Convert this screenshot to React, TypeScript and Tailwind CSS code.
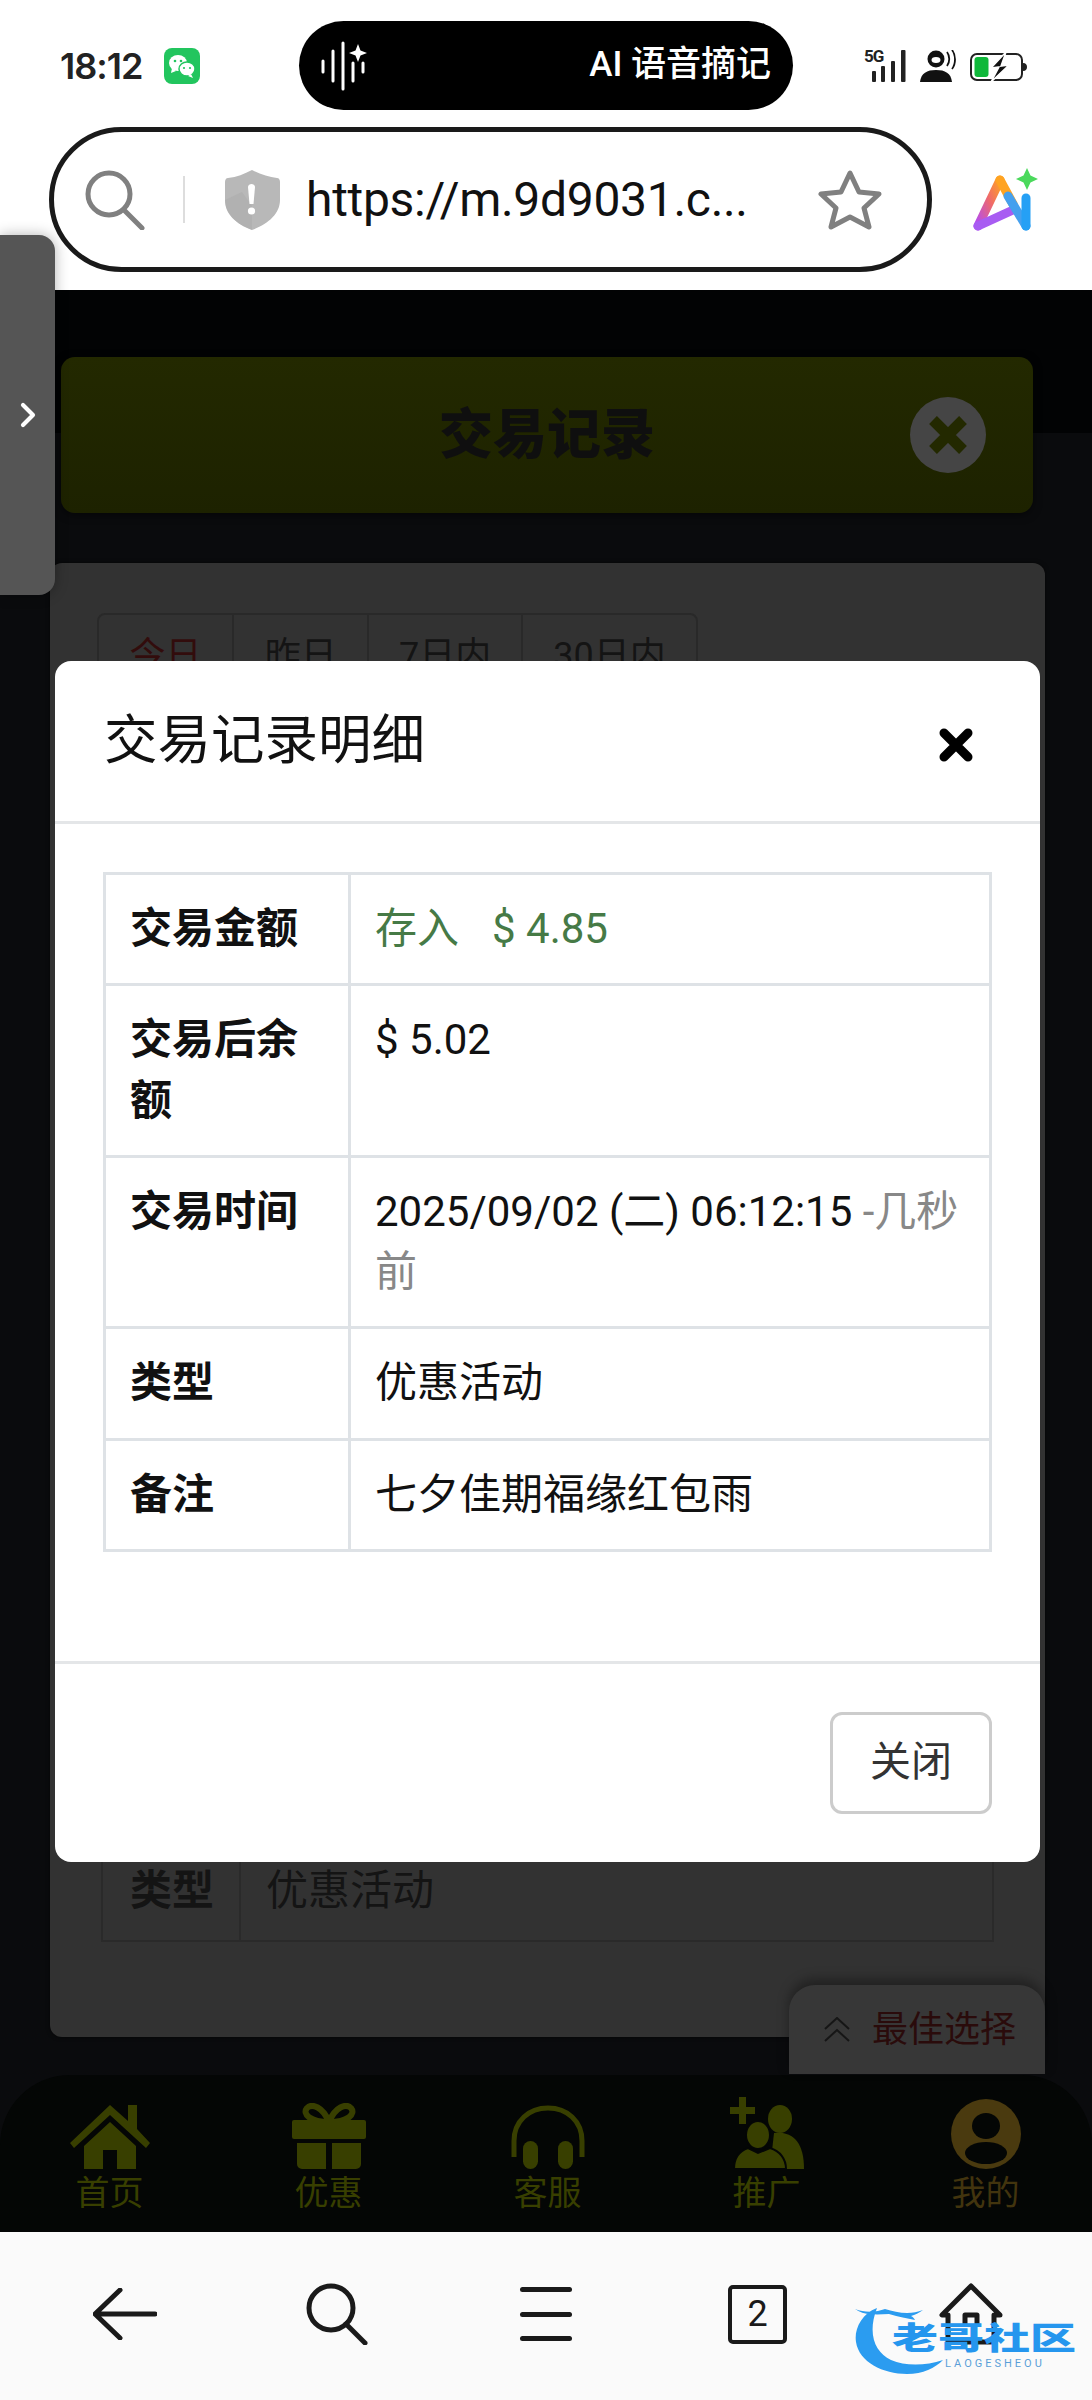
import { ChevronRight } from "lucide-react";

const cjk = "font-['Roboto','Noto_Sans_CJK_SC',sans-serif]";

function WeChatBadge() {
  return (
    <div className="flex h-[36px] w-[36px] items-center justify-center rounded-[8px] bg-[#22c55e]">
      <svg viewBox="0 0 36 36" className="h-[36px] w-[36px]">
        <ellipse cx="14" cy="15" rx="9" ry="8" fill="#fff" />
        <path d="M8 20l-1 5 5-2z" fill="#fff" />
        <ellipse cx="23" cy="21" rx="8" ry="7" fill="#fff" stroke="#22c55e" strokeWidth="1.5" />
        <path d="M27 26l2 4-5-2z" fill="#fff" />
        <circle cx="11" cy="13" r="1.3" fill="#22c55e" />
        <circle cx="17" cy="13" r="1.3" fill="#22c55e" />
        <circle cx="20" cy="20" r="1.1" fill="#22c55e" />
        <circle cx="26" cy="20" r="1.1" fill="#22c55e" />
      </svg>
    </div>
  );
}

function VoiceWave() {
  return (
    <svg viewBox="0 0 50 50" className="h-[50px] w-[50px]" stroke="#fff" strokeWidth="3" strokeLinecap="round">
      <path d="M3 20v11M13 10v30M23 2v46M33 22v18M43 22v9" />
      <path d="M38 3l2.5 6.5L47 12l-6.5 2.5L38 21l-2.5-6.5L29 12l6.5-2.5z" fill="#fff" stroke="none" />
    </svg>
  );
}

function StatusIcons() {
  return (
    <div className="flex items-end gap-[14px]">
      <div className="relative h-[32px] w-[42px]">
        <span className="absolute left-0 top-[-2px] font-['Roboto'] text-[17px] font-bold leading-[16px] tracking-[-1px] text-[#222]">5G</span>
        <svg viewBox="0 0 42 32" className="h-[32px] w-[42px]" fill="#222">
          <rect x="8" y="21" width="4" height="11" rx="1" />
          <rect x="17" y="16" width="4" height="16" rx="1" />
          <rect x="27" y="11" width="4" height="21" rx="1" />
          <rect x="37" y="0" width="4.5" height="32" rx="1" />
        </svg>
      </div>
      <svg viewBox="0 0 36 32" className="h-[32px] w-[36px]">
        <circle cx="16" cy="9" r="8.5" fill="#111" />
        <ellipse cx="16" cy="10" rx="4.5" ry="3" fill="#fff" />
        <path d="M0 32c1-9 7-12 16-12s15 3 16 12z" fill="#111" />
        <path d="M27 2c3 4 3 10 0 14M32 0c4 5 4 14 0 19" fill="none" stroke="#111" strokeWidth="1.8" />
      </svg>
      <svg viewBox="0 0 58 30" className="h-[30px] w-[58px]">
        <rect x="1" y="2" width="51" height="26" rx="6" fill="none" stroke="#222" strokeWidth="2" />
        <rect x="4.5" y="5" width="14" height="20" rx="3" fill="#0fb83a" />
        <path d="M53 11c3 0 4 2 4 4s-1 4-4 4z" fill="#222" />
        <path d="M36 0L21 16l8-1-8 15 18-17-8 1z" fill="#111" stroke="#fff" strokeWidth="1.5" />
      </svg>
    </div>
  );
}

function StatusBar() {
  return (
    <div className="flex h-[127px] items-start pl-[60px] pt-[21px]">
      <div className="flex h-[89px] w-[239px] items-center gap-[22px]">
        <span className="font-['Inter'] text-[36px] font-semibold tracking-[-1px] text-[#222]">18:12</span>
        <WeChatBadge />
      </div>
      <div className="flex h-[89px] w-[494px] items-center justify-between rounded-full bg-black pl-[21px] pr-[22px]">
        <VoiceWave />
        <span className={`${cjk} text-[35px] font-medium text-white`}>AI 语音摘记</span>
      </div>
      <div className="ml-[71px] mt-[29px]">
        <StatusIcons />
      </div>
    </div>
  );
}

function AddressBar() {
  return (
    <div className="flex items-center pl-[49px]">
      <div className="flex h-[145px] w-[883px] items-center rounded-full border-[5px] border-[#1a1a1a] pl-[31px]">
        <svg viewBox="0 0 60 60" className="h-[60px] w-[60px]" fill="none" stroke="#808080" strokeWidth="5" strokeLinecap="round">
          <circle cx="24" cy="24" r="21" />
          <path d="M39 40l18 18" />
        </svg>
        <div className="ml-[38px] h-[47px] w-[2px] bg-[#ddd]" />
        <svg viewBox="0 0 55 60" className="ml-[40px] h-[60px] w-[55px]">
          <path d="M27 0C35 4 44 7 52 8c2 0 3 2 3 4v18c0 14-12 24-28 30C11 54 0 44 0 30V12c0-2 1-4 3-4 9-1 16-4 24-8z" fill="#b8b8b8" />
          <path d="M27 60C11 54 0 44 0 30l17-8 10 14z" fill="#a9a9a9" opacity="0.5" />
          <path d="M23 17c0-2 2-3 3.500-3s3.500 1 3.500 3l-1.500 17h-4z" fill="#fff" />
          <circle cx="26.500" cy="41" r="3.600" fill="#fff" />
        </svg>
        <span className="ml-[26px] w-[448px] font-['Roboto'] text-[48px] font-normal tracking-[-0.3px] text-[#111]">https://m.9d9031.c...</span>
        <svg viewBox="0 0 64 60" className="ml-[64px] h-[62px] w-[64px]" fill="none" stroke="#808080" strokeWidth="5" strokeLinejoin="round">
          <path d="M32 3l9 19 20 2-15 14 5 19-19-10-19 10 5-19L3 24l20-2z" />
        </svg>
      </div>
      <svg viewBox="0 0 66 64" className="ml-[41px] h-[64px] w-[66px]">
        <defs>
          <linearGradient id="aiA" x1="0" y1="1" x2="1" y2="0">
            <stop offset="0" stopColor="#b44cf0" />
            <stop offset="0.55" stopColor="#ef6a6a" />
            <stop offset="1" stopColor="#ffa321" />
          </linearGradient>
        </defs>
        <path d="M5 58L27 12" fill="none" stroke="url(#aiA)" strokeWidth="9" strokeLinecap="round" />
        <path d="M5 58l35-16" fill="none" stroke="#a85cf2" strokeWidth="9" strokeLinecap="round" />
        <path d="M27 12l13 24" fill="none" stroke="#ffa321" strokeWidth="9" strokeLinecap="round" />
        <path d="M35 28l18 30" fill="none" stroke="#45a0ee" strokeWidth="9" strokeLinecap="round" />
        <path d="M53 30v28" fill="none" stroke="#25a0f5" strokeWidth="9" strokeLinecap="round" />
        <path d="M54 0l3.500 7.500 7.500 3.500-7.500 3.500L54 22l-3.500-7.500L43 11l7.500-3.500z" fill="#4bd95c" />
      </svg>
    </div>
  );
}

function HiddenTabs() {
  const tabs = [
    { label: "今日", w: "w-[134px]", color: "text-[#320c0c]" },
    { label: "昨日", w: "w-[136px]", color: "text-[#141414]" },
    { label: "7日内", w: "w-[155px]", color: "text-[#141414]" },
    { label: "30日内", w: "w-[176px]", color: "text-[#141414]" },
  ];
  return (
    <div className="flex h-[100px] w-[601px] rounded-[8px] border-[2px] border-[#292929]">
      {tabs.map((t, i) => (
        <div key={t.label} className={`${t.w} ${t.color} flex items-start justify-center pt-[14px] text-[36px] ${i > 0 ? "border-l-[2px] border-[#292929]" : ""}`}>
          {t.label}
        </div>
      ))}
    </div>
  );
}

function Header() {
  return (
    <div className="relative ml-[61px] mt-[67px] flex h-[156px] w-[972px] items-center justify-center rounded-[14px] bg-gradient-to-b from-[#232900] to-[#1d2200] shadow-[0_2px_8px_rgba(0,0,0,0.5)]">
      <h1 className={`${cjk} text-[54px] font-black text-[#0f0f0f]`}>交易记录</h1>
      <div className="absolute right-[47px] top-[40px] flex h-[76px] w-[76px] items-center justify-center rounded-full bg-[#454545]">
        <svg viewBox="0 0 40 40" className="h-[40px] w-[40px]" stroke="#232900" strokeWidth="11">
          <path d="M5 5l30 30M35 5L5 35" />
        </svg>
      </div>
    </div>
  );
}

function Panel() {
  return (
    <div className="ml-[50px] mt-[50px] flex h-[1474px] w-[995px] flex-col justify-between rounded-[12px] bg-[#323232] px-[47px] pb-[95px] pt-[50px] shadow-[0_0_4px_rgba(0,0,0,0.6)]">
      <HiddenTabs />
      <table className="ml-[4px] w-[893px] border-collapse border-[2px] border-[#2a2a2a] text-[42px] text-[#141414]">
        <tbody>
          <tr>
            <th className="h-[111px] w-[138px] border-[2px] border-[#2a2a2a] pl-[27px] pt-[10px] text-left font-bold">类型</th>
            <td className="border-[2px] border-[#2a2a2a] pl-[25px] pt-[10px]">优惠活动</td>
          </tr>
        </tbody>
      </table>
    </div>
  );
}

function HomeIcon() {
  return (
    <svg viewBox="0 0 80 64" className="h-[64px] w-[80px]" fill="#383f00">
      <path d="M40 0l18 16V0h9v24l13 14-4 5L40 10 4 43l-4-5z" />
      <path d="M40 17l26 24v23H47V45H33v19H14V41z" />
    </svg>
  );
}

function GiftIcon() {
  return (
    <svg viewBox="0 0 74 66" className="h-[66px] w-[74px]">
      <path d="M37 19C31 4 20 0 15 5c-5 6 3 14 22 14zm0 0C43 4 54 0 59 5c5 6-3 14-22 14z" fill="none" stroke="#383f00" strokeWidth="6" />
      <rect x="0" y="17" width="74" height="19" rx="2" fill="#383f00" />
      <path d="M5 40h29v26H10a5 5 0 0 1-5-5zM40 40h29v21a5 5 0 0 1-5 5H40z" fill="#383f00" />
    </svg>
  );
}

function HeadsetIcon() {
  return (
    <svg viewBox="0 0 74 64" className="h-[64px] w-[74px]">
      <path d="M3 52V36C3 16 18 3 37 3s34 13 34 33v16" fill="none" stroke="#383f00" strokeWidth="5" />
      <rect x="12" y="36" width="15" height="28" rx="7.5" fill="#383f00" />
      <rect x="47" y="36" width="15" height="28" rx="7.5" fill="#383f00" />
    </svg>
  );
}

function InviteIcon() {
  return (
    <svg viewBox="0 0 74 72" className="h-[72px] w-[74px]" fill="#383f00">
      <path d="M9 0h7v10h9v7h-9v10H9V17H0v-7h9z" />
      <ellipse cx="50" cy="22" rx="12" ry="14" />
      <path d="M44 36c18-2 30 8 30 36H40z" />
      <ellipse cx="28" cy="38" rx="12" ry="14" stroke="#040605" strokeWidth="2" />
      <path d="M4 72c0-10 5-18 14-21l10 5 12-5c10 3 16 11 16 21z" stroke="#040605" strokeWidth="2" />
    </svg>
  );
}

function MineIcon() {
  return (
    <svg viewBox="0 0 70 70" className="h-[70px] w-[70px]">
      <circle cx="35" cy="35" r="35" fill="#4a3a0f" />
      <ellipse cx="35" cy="27" rx="14" ry="13" fill="#040605" />
      <ellipse cx="35" cy="54" rx="21" ry="11" fill="#040605" />
    </svg>
  );
}

function BottomNav() {
  const items = [
    { label: "首页", icon: <HomeIcon />, color: "text-[#383f00]" },
    { label: "优惠", icon: <GiftIcon />, color: "text-[#383f00]" },
    { label: "客服", icon: <HeadsetIcon />, color: "text-[#383f00]" },
    { label: "推广", icon: <InviteIcon />, color: "text-[#383f00]" },
    { label: "我的", icon: <MineIcon />, color: "text-[#42340e]" },
  ];
  return (
    <nav className="mt-auto flex h-[157px] rounded-t-[70px] bg-[#040605]">
      {items.map((item) => (
        <div key={item.label} className="flex w-[219px] shrink-0 flex-col items-center pt-[22px]">
          <div className="flex h-[72px] items-end">{item.icon}</div>
          <span className={`${item.color} mt-[3px] text-[34px] leading-[42px]`}>{item.label}</span>
        </div>
      ))}
    </nav>
  );
}

function DetailModal() {
  const th = "border-[3px] border-[#dee2e6] px-[24px] py-[24px] text-left align-top font-bold";
  const td = "border-[3px] border-[#dee2e6] px-[24px] py-[24px] align-top";
  return (
    <div className="absolute left-[55px] top-[371px] flex h-[1201px] w-[985px] flex-col rounded-[16px] bg-white text-[#111]">
      <div className="flex h-[163px] shrink-0 items-center justify-between border-b-[3px] border-[#e4e6e8] pl-[49px] pr-[67px]">
        <h2 className="text-[53.5px] font-normal">交易记录明细</h2>
        <svg viewBox="0 0 34 34" className="mt-[8px] h-[34px] w-[34px]" stroke="#000" strokeWidth="9" strokeLinecap="round">
          <path d="M5 5l24 24M29 5L5 29" />
        </svg>
      </div>
      <div className="flex-1 px-[48px] pt-[48px]">
        <table className="w-[889px] border-collapse border-[3px] border-[#dee2e6] text-[42px] leading-[60.3px]">
          <tbody>
            <tr>
              <th className={`${th} w-[245px]`}>交易金额</th>
              <td className={`${td} text-[#467a46]`}>
                存入<span className="ml-[33px]">$ 4.85</span>
              </td>
            </tr>
            <tr>
              <th className={th}>交易后余额</th>
              <td className={td}>$ 5.02</td>
            </tr>
            <tr>
              <th className={th}>交易时间</th>
              <td className={td}>
                2025/09/02 (二) 06:12:15 <span className="text-[#888]">-几秒前</span>
              </td>
            </tr>
            <tr>
              <th className={th}>类型</th>
              <td className={td}>优惠活动</td>
            </tr>
            <tr>
              <th className={th}>备注</th>
              <td className={td}>七夕佳期福缘红包雨</td>
            </tr>
          </tbody>
        </table>
      </div>
      <div className="flex h-[201px] shrink-0 items-center justify-end border-t-[3px] border-[#e4e6e8] pr-[48px]">
        <button className="h-[102px] w-[162px] rounded-[12px] border-[3px] border-[#ccc] text-[41px] text-[#333]">关闭</button>
      </div>
    </div>
  );
}

function Watermark() {
  return (
    <div className="absolute left-[855px] top-[68px] h-[76px] w-[225px]">
      <svg viewBox="0 0 110 76" className="absolute left-0 top-0 h-[76px] w-[110px]" fill="#2b9cf0">
        <path d="M22 8C6 14-1 30 1 42c3 20 27 32 51 32 16 0 28-6 36-14-18 6-38 6-52 0C20 52 12 34 22 8z" />
        <path d="M0 9c10 4 22 3 30 0 12 4 26 6 38 1-4 3-8 5-12 6 2 1 3 2 4 4-8-2-16-3-26-6-6 0-12 1-18 0C10 14 4 12 0 9z" />
      </svg>
      <span className={`${cjk} absolute left-[37px] top-[15px] origin-center scale-y-[0.66] whitespace-nowrap text-[46px] font-black leading-[46px] text-[#2596ee]`}>老哥社区</span>
      <span className="absolute left-[90px] top-[56px] font-['Roboto'] text-[11px] tracking-[3px] text-[#5a9fd8]">LAOGESHEOU</span>
    </div>
  );
}

function BrowserBar() {
  return (
    <div className="relative flex h-[168px] shrink-0 items-center bg-[#fafafa] pb-[4px] pl-[93px]">
      <svg viewBox="0 0 64 52" className="h-[52px] w-[64px]" fill="none" stroke="#1a1a1a" strokeWidth="5" strokeLinecap="round" strokeLinejoin="round">
        <path d="M27 2L2 26l25 24M3 26h59" />
      </svg>
      <svg viewBox="0 0 62 62" className="ml-[149px] h-[62px] w-[62px]" fill="none" stroke="#1a1a1a" strokeWidth="5" strokeLinecap="round">
        <circle cx="25" cy="25" r="22" />
        <path d="M40 41l19 19" />
      </svg>
      <div className="ml-[152px] flex h-[54px] w-[52px] flex-col justify-between">
        <div className="h-[5px] rounded-full bg-[#1a1a1a]" />
        <div className="h-[5px] rounded-full bg-[#1a1a1a]" />
        <div className="h-[5px] rounded-full bg-[#1a1a1a]" />
      </div>
      <div className="ml-[156px] flex h-[59px] w-[59px] items-center justify-center rounded-[5px] border-[4px] border-[#1a1a1a] font-['Roboto'] text-[36px] text-[#1a1a1a]">2</div>
      <svg viewBox="0 0 64 62" className="ml-[152px] h-[62px] w-[64px]" fill="none" stroke="#1a1a1a" strokeWidth="5" strokeLinejoin="round">
        <path d="M32 3L3 32h6v27h46V32h6z" />
        <path d="M26 44V32h12v12" />
      </svg>
      <Watermark />
    </div>
  );
}

export default function App() {
  return (
    <div className={`${cjk} relative flex h-[2400px] w-[1092px] flex-col overflow-hidden bg-white`}>
      <div className="h-[290px] shrink-0">
        <StatusBar />
        <AddressBar />
      </div>
      <main className="relative flex flex-1 flex-col bg-[linear-gradient(#020304_143px,#0a0b0d_143px)]">
        <Header />
        <Panel />
        <BottomNav />
        <div className="absolute left-[789px] top-[1695px] flex h-[89px] w-[256px] items-center rounded-t-[26px] bg-[#373737] pl-[34px] shadow-[0_-6px_12px_rgba(0,0,0,0.35)]">
          <svg viewBox="0 0 28 26" className="h-[26px] w-[28px]" fill="none" stroke="#161616" strokeWidth="2">
            <path d="M2 12L14 1l12 11M2 24l12-11 12 11" />
          </svg>
          <span className="ml-[21px] text-[36px] text-[#2a0b0b]">最佳选择</span>
        </div>
        <DetailModal />
      </main>
      <BrowserBar />
      <div className="absolute left-0 top-[235px] flex h-[360px] w-[55px] items-center justify-center rounded-r-[16px] bg-[#555] shadow-[0_0_14px_rgba(0,0,0,0.3)]">
        <ChevronRight className="h-[40px] w-[40px] text-white" strokeWidth={2.5} />
      </div>
    </div>
  );
}
